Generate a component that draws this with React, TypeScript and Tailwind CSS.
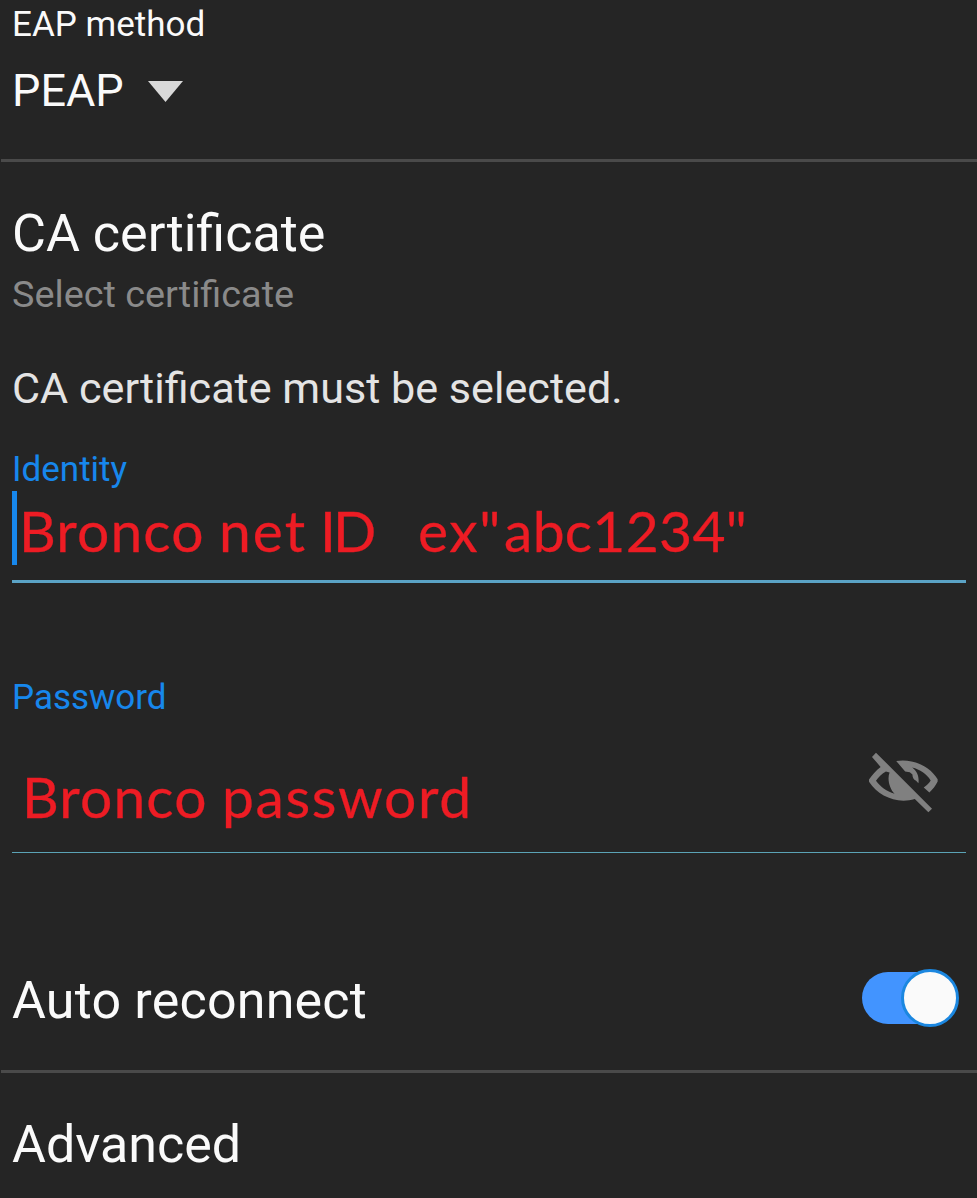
import { useState } from "react";

function HiddenEyeIcon() {
  return (
    <svg viewBox="54 64 214 184" className="h-[61px] w-[71px]" fill="#808080">
      <path d="M78 66 L247 235 L236 246 L195 206 C140 222 85 197 57 154 L57 147 C66 133 78 120 92 109 L66 79 Z M108 123 C96 129 86 139 78 151 C92 170 110 183 134 190 C119 174 111 146 119 126 Z" fillRule="evenodd" />
      <path d="M139 91 C190 83 240 107 264 146 L264 153 C258 166 249 177 239 186 L222 171 C232 164 239 157 243 150 C231 130 211 117 187 111 C202 121 209 140 206 158 L199 151 C191 147 188 140 188 132 L180 125 L166 123 Z" />
    </svg>
  );
}

function AutoReconnectSwitch() {
  const [on, setOn] = useState(true);
  return (
    <button
      role="switch"
      aria-checked={on}
      aria-label="Auto reconnect"
      onClick={() => setOn(!on)}
      className={`flex h-[52px] w-[97px] items-center rounded-full ${on ? "justify-end" : "justify-start"}`}
    >
      <span className={`-mr-[51px] h-[52px] w-[90px] rounded-full ${on ? "bg-[#4294ff]" : "bg-[#666666]"}`} />
      <span className="relative h-[58px] w-[58px] shrink-0 rounded-full border-[3px] border-[#1b87e0] bg-[#fafafa]" />
    </button>
  );
}

export default function App() {
  return (
    <main className="flex h-[1198px] w-[977px] flex-col overflow-hidden bg-[#252525] font-['Roboto',sans-serif] text-[#fafafa]">
      <section className="ml-px flex h-[162px] flex-col border-b-[3px] border-[#4a4a4a] pt-[5px] pl-[11px]">
        <div className="text-[35px] leading-[40px]">EAP method</div>
        <div className="mt-[19px] flex items-center gap-[24.5px]">
          <span className="text-[45px] leading-[54px]">PEAP</span>
          <svg viewBox="0 0 35 21" className="h-[21px] w-[35px]" fill="#d9d9d9">
            <path d="M0 0H35L17.5 21Z" />
          </svg>
        </div>
      </section>

      <section className="flex h-[288px] flex-col pt-[42px] pl-3">
        <h2 className="text-[52.1px] leading-[60px]">CA certificate</h2>
        <p className="mt-[7px] text-[37.8px] leading-[46px] text-[#8a8a8a]">Select certificate</p>
        <p className="mt-[47px] text-[43.15px] leading-[50px] text-[#e4e4e4]">CA certificate must be selected.</p>
      </section>

      <section className="mr-[11px] ml-3 flex h-[133px] flex-col border-b-[3px] border-[#5ba3c6]">
        <label className="text-[35px] leading-[40px] text-[#1787ec]">Identity</label>
        <div className="mt-px flex h-[74px] border-l-[5px] border-[#1787ec] pt-[2px] pl-[2px] font-['Lato',sans-serif] text-[57px] leading-[74px] whitespace-pre text-[#ed1c24] [-webkit-text-stroke:0.3px_#ed1c24]">
          <span className="w-[200px] tracking-[1.1px]">Bronco </span>
          <span className="w-[101px] tracking-[2px]">net </span>
          <span className="w-[98px] tracking-[-3px]">ID </span>
          <span className="w-[86px] tracking-[1.6px]">ex"</span>
          <span className="tracking-[0.3px]">abc1234"</span>
        </div>
      </section>

      <section className="mt-[95px] mr-[11px] ml-3 flex h-[175px] flex-col border-b border-[#5ba3b6]">
        <label className="text-[35px] leading-[40px] text-[#1787ec]">Password</label>
        <div className="flex justify-between pt-[34px] pr-[27px] pl-[10px]">
          <div className="flex pt-[7px] font-['Lato',sans-serif] text-[57px] leading-[74px] whitespace-pre text-[#ed1c24] [-webkit-text-stroke:0.3px_#ed1c24]">
            <span className="w-[200px] tracking-[1.1px]">Bronco </span>
            <span className="tracking-[1.6px]">password</span>
          </div>
          <HiddenEyeIcon />
        </div>
      </section>

      <section className="ml-px flex h-[220px] justify-between border-b-[3px] border-[#4a4a4a] pt-[118px] pr-[18px] pl-[11px]">
        <h2 className="text-[52px] leading-[60px] tracking-[0.2px]">Auto reconnect</h2>
        <div className="pt-px">
          <AutoReconnectSwitch />
        </div>
      </section>

      <section className="pt-[42px] pl-3">
        <h2 className="text-[52px] leading-[60px]">Advanced</h2>
      </section>
    </main>
  );
}
